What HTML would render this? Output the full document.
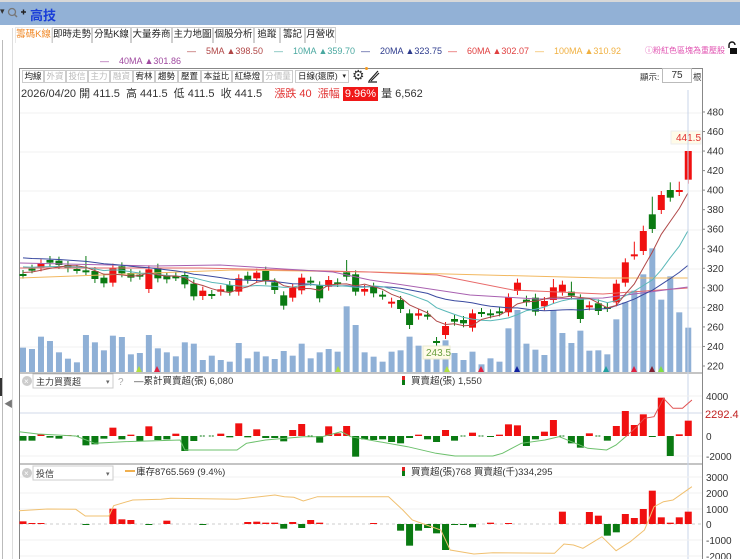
<!DOCTYPE html>
<html><head><meta charset="utf-8">
<style>
*{margin:0;padding:0;box-sizing:border-box}
body{width:740px;height:559px;overflow:hidden;background:#fff;font-family:"Liberation Sans","Noto Sans CJK TC",sans-serif;font-size:11px;color:#333;position:relative}
.abs{position:absolute;white-space:nowrap}
.tab{position:absolute;top:27px;height:16px;border:1px solid #cfcfcf;border-bottom:none;background:#fff;font-size:9.5px;line-height:14px;text-align:center;color:#222;overflow:hidden}
.btn{position:absolute;top:70px;height:13px;border:1px solid #ccc;font-size:8.5px;line-height:11px;text-align:center;color:#222;background:#fff;overflow:hidden}
.gr{color:#bbb}
.lg{position:absolute;top:46px;font-size:9px;white-space:nowrap}
</style></head><body>
<div class="abs" style="left:0;top:0;width:740px;height:2px;background:#d8d8d8"></div>
<div class="abs" style="left:0;top:2px;width:740px;height:23px;background:#92b1d6"></div>
<div class="abs" style="left:0;top:6px;font-size:9px;color:#333">▾</div>
<svg class="abs" style="left:6px;top:7px" width="22" height="12"><circle cx="6" cy="5" r="3.5" fill="none" stroke="#777" stroke-width="1.3"/><line x1="8.5" y1="7.5" x2="11" y2="10" stroke="#777" stroke-width="1.5"/><path d="M15 5h5M17.5 2.5v5" stroke="#222" stroke-width="1.4"/></svg>
<div class="abs" style="left:30px;top:5px;font-size:13px;font-weight:bold;color:#1a3fd8">高技</div>
<div class="abs" style="left:2px;top:40px;width:1px;height:519px;background:#bbb"></div>
<div class="abs" style="left:0;top:378px;width:2px;height:18px;background:#333"></div>
<div class="abs" style="left:4px;top:397px;font-size:9px;color:#777">◀</div>
<div class="abs" style="left:12px;top:28px;width:1px;height:531px;background:#ddd"></div>
<div class="tab" style="left:15px;width:37px;color:#f08a2a;border-color:#e8e8e8">籌碼K線</div>
<div class="tab" style="left:52px;width:40px">即時走勢</div>
<div class="tab" style="left:92px;width:39px">分點K線</div>
<div class="tab" style="left:131px;width:41px">大量券商</div>
<div class="tab" style="left:172px;width:41px">主力地圖</div>
<div class="tab" style="left:213px;width:41px">個股分析</div>
<div class="tab" style="left:254px;width:26px">追蹤</div>
<div class="tab" style="left:280px;width:25px">籌記</div>
<div class="tab" style="left:305px;width:31px">月營收</div>
<div class="lg" style="left:187px;color:#b04545">—&nbsp;&nbsp;&nbsp; 5MA ▲398.50</div>
<div class="lg" style="left:274px;color:#4aa8a0">—&nbsp;&nbsp;&nbsp; 10MA ▲359.70</div>
<div class="lg" style="left:361px;color:#2c3a8c">—&nbsp;&nbsp;&nbsp; 20MA ▲323.75</div>
<div class="lg" style="left:448px;color:#e04040">—&nbsp;&nbsp;&nbsp; 60MA ▲302.07</div>
<div class="lg" style="left:535px;color:#f0b040">—&nbsp;&nbsp;&nbsp; 100MA ▲310.92</div>
<div class="abs" style="left:645px;top:45px;font-size:8px;color:#e050b0">ⓘ粉紅色區塊為重壓股</div>
<svg class="abs" style="left:726px;top:41px" width="12" height="14"><path d="M3 7V4a3 3 0 0 1 6 0" stroke="#111" stroke-width="1.4" fill="none"/><rect x="4" y="7" width="7" height="6" fill="#111"/></svg>
<div class="lg" style="left:100px;top:56px;color:#a04aa0">—&nbsp;&nbsp;&nbsp; 40MA ▲301.86</div>
<div class="abs" style="left:19px;top:68px;width:684px;height:491px;border:1px solid #888;border-bottom:none"></div>
<div class="btn" style="left:22px;width:22px">均線</div>
<div class="btn gr" style="left:44px;width:22px">外資</div>
<div class="btn gr" style="left:66px;width:22px">投信</div>
<div class="btn gr" style="left:88px;width:22px">主力</div>
<div class="btn gr" style="left:110px;width:23px">融資</div>
<div class="btn" style="left:133px;width:22px">宥林</div>
<div class="btn" style="left:155px;width:23px">趨勢</div>
<div class="btn" style="left:178px;width:23px">壓置</div>
<div class="btn" style="left:201px;width:31px">本益比</div>
<div class="btn" style="left:232px;width:31px">紅綠燈</div>
<div class="btn gr" style="left:263px;width:30px">分價量</div>
<div class="btn" style="left:295px;width:54px;text-align:left;padding-left:2px">日線(還原)<span style="position:absolute;right:2px;font-size:7px">▾</span></div>
<div class="abs" style="left:352px;top:67px;font-size:14px;color:#333">⚙</div>
<div class="abs" style="left:365px;top:67px;width:3px;height:3px;border-radius:2px;background:#f39a20"></div>
<svg class="abs" style="left:367px;top:69px" width="14" height="14"><path d="M2 12L11 2M4 12L12 4M1 13h9" stroke="#222" stroke-width="1.2" fill="none"/></svg>
<div class="abs" style="left:640px;top:71px;font-size:8.5px;color:#333">顯示:</div>
<div class="abs" style="left:662px;top:68px;width:30px;height:15px;border:1px solid #bbb;font-size:10px;text-align:center;line-height:13px">75</div>
<div class="abs" style="left:693px;top:71px;font-size:8.5px;color:#333">根</div>
<div class="abs" style="left:21px;top:85px;font-size:11px;color:#333">2026/04/20 開 411.5&nbsp; 高 441.5&nbsp; 低 411.5&nbsp; 收 441.5&nbsp;&nbsp;&nbsp; <span style="color:#e03030">漲跌 40&nbsp; 漲幅 </span><span style="background:#f01818;color:#fff;padding:1px 2px">9.96%</span> 量 6,562</div>
<svg id="s" class="abs" style="left:0;top:0" width="740" height="559"></svg>
<script>
var S=document.getElementById('s'),h='';
function X(i){return 23+i*8.99}
function Y(p){return 95+p/3}
[113,152,191,230,269,308,347].forEach(function(y){h+='<line x1="20" x2="702" y1="'+y+'" y2="'+y+'" stroke="#f0f0f0"/>'});
var V4=[758,762,725,738,772,791,802,720,742,766,722,726,778,774,720,760,772,784,742,746,795,782,795,800,744,790,770,784,792,768,782,746,790,772,762,770,634,690,772];
var V5=[785,800,770,766,725,752,790,790,736,774,795,770,808,790,800,700,645,746,764,780,645,714,744,707,767,766,778,673,622,587,538,460,614,544,652,698];
var V=V4.concat(V5);while(V.length<75)V.push(780);
V.forEach(function(t,i){var y=Y(t);h+='<rect x="'+(X(i)-3)+'" y="'+y+'" width="6" height="'+(372-y)+'" fill="#8fb0d6"/>'});
var C=[[537,539,'g'],[521,523,'g'],[505,517,'r'],[495,503,'g'],[497,510,'g'],[510,520,'g'],[522,524,'g'],[526,528,'g'],[528,552,'g'],[548,565,'g'],[518,563,'r'],[514,535,'g'],[534,548,'g'],[539,542,'g'],[523,582,'r'],[518,550,'g'],[543,553,'g'],[544,546,'g'],[540,568,'g'],[566,604,'g'],[587,603,'r'],[597,600,'g'],[583,590,'r'],[570,590,'g'],[550,590,'r'],[542,554,'g'],[533,550,'r'],[527,557,'g'],[562,585,'g'],[601,632,'g'],[579,608,'r'],[548,586,'r'],[557,560,'g'],[571,610,'g'],[555,575,'r'],[562,564,'g'],[532,545,'g'],[538,590,'g'],[582,590,'r'],
[575,595,'g'],[599,602,'g'],[620,626,'r'],[615,642,'g'],[655,690,'g'],[655,662,'r'],[659,662,'g'],[738,742,'g'],[693,720,'r'],[672,680,'g'],[675,685,'g'],[655,698,'r'],[651,654,'g'],[655,658,'g'],[649,652,'g'],[607,652,'r'],[563,588,'r'],[614,622,'g'],[608,650,'g'],[618,634,'r'],[577,615,'r'],[569,590,'r'],[590,602,'g'],[610,672,'g'],[631,634,'r'],[625,648,'g'],[636,639,'g'],[566,622,'r'],[502,563,'r'],[478,482,'r'],[408,468,'r'],[358,402,'g'],[300,345,'r'],[285,308,'g'],[285,291,'r'],[168,254,'r']];
var HI={7:483,36:495,68:440,70:305,69:392,59:552,61:560,74:168,73:260,72:262};
var cl=[];
C.forEach(function(c,i){var t=Y(c[0]),b=Y(c[1]);cl.push(c[2]=='r'?t:b);
 var col=c[2]=='r'?'#f01010':'#0a7a12';var ht=HI[i]!=null?Y(HI[i]):t-4;
 h+='<line x1="'+X(i)+'" x2="'+X(i)+'" y1="'+ht+'" y2="'+(b+4)+'" stroke="'+col+'"/>';
 h+='<rect x="'+(X(i)-3.5)+'" y="'+t+'" width="7" height="'+Math.max(2,b-t)+'" fill="'+col+'"/>';});
function ma(n,pad,col){var p='';for(var i=0;i<75;i++){var s=0;for(var k=i-n+1;k<=i;k++)s+=(k<0?pad:cl[k]);p+=X(i)+','+(s/n).toFixed(1)+' '}h+='<polyline points="'+p+'" fill="none" stroke="'+col+'" stroke-width="1"/>'}
function pl(a,col){h+='<polyline points="'+a+'" fill="none" stroke="'+col+'" stroke-width="1"/>'}
pl('20,278 233,270 370,272 603,278 688,278','#f2b860');
pl('20,268 200,268 370,272 437,275 513,290 603,294 688,288','#e86a6a');
pl('20,263 153,266 220,265 333,272 370,280 470,295 537,299 603,298 688,287','#a860b0');
ma(20,257,'#3a4aa0');ma(10,266,'#5ab8b8');ma(5,272,'#b04848');
h+='<rect x="671" y="131" width="30" height="13" fill="#fffbe8" stroke="#eee"/><text x="676" y="141" font-size="10" fill="#e03030">441.5</text>';
h+='<rect x="423" y="346" width="27" height="13" fill="#fffbe8" stroke="#e8e8d0"/><text x="426" y="356" font-size="10" fill="#6aa040">243.5</text>';
[[139,'#b0e040'],[157,'#e02040'],[338,'#b0e040'],[447,'#b0e040'],[481,'#e02040'],[517,'#1020a0'],[606,'#20a0a0'],[634,'#e02040'],[652,'#802030'],[661,'#80e040']].forEach(function(m){h+='<path d="M'+(m[0]-3)+' 372L'+m[0]+' 366L'+(m[0]+3)+' 372Z" fill="'+m[1]+'"/>'});
for(var p=220;p<=480;p+=20){var y=366-(p-220)*0.977;h+='<line x1="702" x2="705" y1="'+y+'" y2="'+y+'" stroke="#888"/><text x="707" y="'+(y+3.5)+'" font-size="10" fill="#333">'+p+'</text>'}
h+='<line x1="20" x2="702" y1="373" y2="373" stroke="#888"/><line x1="20" x2="702" y1="464" y2="464" stroke="#888"/>';
h+='<line x1="688" x2="688" y1="90" y2="559" stroke="#c8d4e8"/>';
h+='<line x1="20" x2="702" y1="396" y2="396" stroke="#f0f0f0"/><line x1="20" x2="702" y1="413" y2="413" stroke="#d0dae8"/><line x1="20" x2="702" y1="456" y2="456" stroke="#f0f0f0"/>';
var P2=[-14,-14,5,-5,-8,2,0,-28,-25,-8,25,-10,4,-15,29,-12,-10,7,-45,-15,0,0,7,-4,38,-4,20,-6,-6,-16,18,36,0,-20,29,8,30,-62,-10,-12,-10,-18,-22,-6,4,-10,-18,18,-14,0,10,0,-2,4,35,32,-30,-10,13,48,0,-22,-35,8,0,-14,30,75,33,65,-2,115,-60,5,46];
function bars(A,base){A.forEach(function(v,i){var r=v/3;if(Math.abs(r)<1)r=r<0?-1:1;if(v==0){h+='<line x1="'+(X(i)-3)+'" x2="'+(X(i)+3)+'" y1="'+base+'" y2="'+base+'" stroke="#0a7a12" stroke-dasharray="2,1"/>';return}
 h+='<rect x="'+(X(i)-3.5)+'" y="'+(r>0?base-r:base)+'" width="7" height="'+Math.abs(r)+'" fill="'+(v>0?'#f01010':'#0a7a12')+'"/>'})}
bars(P2,436);
function zp(a,oy,col){var p='';for(var i=0;i<a.length;i+=2)p+=(a[i]/2.11).toFixed(1)+','+(oy+a[i+1]/3).toFixed(1)+' ';pl(p,col)}
zp([40,215,80,222,160,228,200,250,260,245,380,240,390,270,500,270,520,250,560,240,640,230,680,230,720,215,740,230,800,245,860,260,920,280,960,288,1040,288,1060,280,1100,250,1150,240,1180,230,1240,265,1280,270,1300,255,1320,230],360,'#6cc06c');
zp([1320,230,1340,205,1360,175,1380,170,1400,115,1420,145,1440,145,1460,120],360,'#e05050');
[[4000,396],[0,436],[-2000,456]].forEach(function(a){h+='<text x="706" y="'+(a[1]+4)+'" font-size="10" fill="#333">'+a[0]+'</text>'});
h+='<text x="705" y="418" font-size="11" fill="#c02020">2292.4</text>';
var m3={0:8,1:2,2:2,7:-2,10:46,11:14,12:12,14:-2,16:10,20:-2,25:6,26:7,27:4,28:4,29:-14,30:6,31:-12,32:12,33:4,39:2,42:-20,43:-65,44:-20,45:-12,46:-28,47:-78,48:-2,49:-2,50:-10,52:4,54:2,60:37,63:36,64:25,65:-35,66:-25,67:30,68:18,69:45,70:100,71:20,72:4,73:20,74:37};
h+='<line x1="20" x2="702" y1="524" y2="524" stroke="#ccc" stroke-dasharray="3,3"/>';
[477,493,509,540,556].forEach(function(y){h+='<line x1="20" x2="702" y1="'+y+'" y2="'+y+'" stroke="#f2f2f2"/>'});
for(var k in m3){var v=m3[k],i=+k,r=v/3;if(Math.abs(r)<1)r=r<0?-1:1;h+='<rect x="'+(X(i)-3.5)+'" y="'+(r>0?524-r:524)+'" width="7" height="'+Math.abs(r)+'" fill="'+(v>0?'#f01010':'#0a7a12')+'"/>'}
zp([40,452,100,447,160,448,180,468,230,468,240,437,280,420,340,418,360,415,500,418,580,405,600,410,620,412,640,423,670,410,820,410,850,450,870,480,900,495,930,510,950,570,1000,582,1040,578,1170,580,1190,552,1210,555,1230,565,1270,530,1300,572,1330,545,1360,510,1380,440,1400,425,1420,420,1440,400,1460,380],360,'#f0c070');
[[3000,477],[2000,493],[1000,509],[0,524],[-1000,540],[-2000,556]].forEach(function(a){h+='<text x="706" y="'+(a[1]+4)+'" font-size="10" fill="#333">'+a[0]+'</text>'});
function hdr(y,t){h+='<circle cx="27" cy="'+(y+7)+'" r="5" fill="#ccc"/><text x="24" y="'+(y+10)+'" font-size="8" fill="#fff">×</text><rect x="33" y="'+y+'" width="80" height="14" fill="#fff" stroke="#ccc"/><text x="36" y="'+(y+11)+'" font-size="9" fill="#333">'+t+'</text><text x="106" y="'+(y+10)+'" font-size="7" fill="#666">▾</text>'}
hdr(374,'主力買賣超');hdr(466,'投信');
h+='<text x="118" y="385" font-size="10" fill="#aaa">?</text>';
h+='<text x="134" y="384" font-size="9.5" fill="#333">—累計買賣超(張) 6,080</text>';
h+='<rect x="402" y="376" width="3" height="4" fill="#e02020"/><rect x="402" y="380" width="3" height="5" fill="#0a7a12"/><text x="411" y="384" font-size="9.5" fill="#333">買賣超(張) 1,550</text>';
h+='<line x1="125" x2="135" y1="471" y2="471" stroke="#f0b050" stroke-width="2"/><text x="136" y="475" font-size="9.5" fill="#333">庫存8765.569 (9.4%)</text>';
h+='<rect x="402" y="467" width="3" height="4" fill="#e02020"/><rect x="402" y="471" width="3" height="5" fill="#0a7a12"/><text x="411" y="475" font-size="9.5" fill="#333">買賣超(張)768 買賣超(千)334,295</text>';
S.innerHTML=h;
</script>
</body></html>
